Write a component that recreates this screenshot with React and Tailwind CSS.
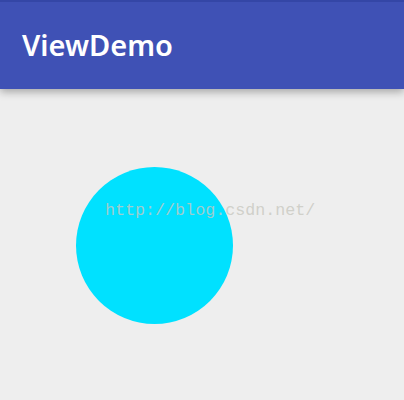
import React from 'react';

const App = () => {
  return (
    <div className="w-[404px] h-[400px] bg-[#eeeeee] overflow-hidden flex flex-col">
      {/* App bar */}
      <div className="relative z-10 h-[89px] bg-[#3f51b5] border-t-2 border-[#3446a6] shadow-[0_3px_8px_rgba(0,0,0,0.3)] flex items-center pl-[22px] pb-[2px]">
        <h1 className="text-white text-[29px] font-semibold font-['Noto_Sans',Roboto,sans-serif]">
          ViewDemo
        </h1>
      </div>

      {/* Content */}
      <div className="relative flex-1">
        <div className="absolute left-[76px] top-[78px] w-[157px] h-[157px] rounded-full bg-[#00e1ff]" />
        <span className="absolute left-[105px] top-[114px] text-[16.7px] leading-none text-[#c8c8c0]/80 font-['Liberation_Mono',monospace]">
          http://blog.csdn.net/
        </span>
      </div>
    </div>
  );
};

export default App;
